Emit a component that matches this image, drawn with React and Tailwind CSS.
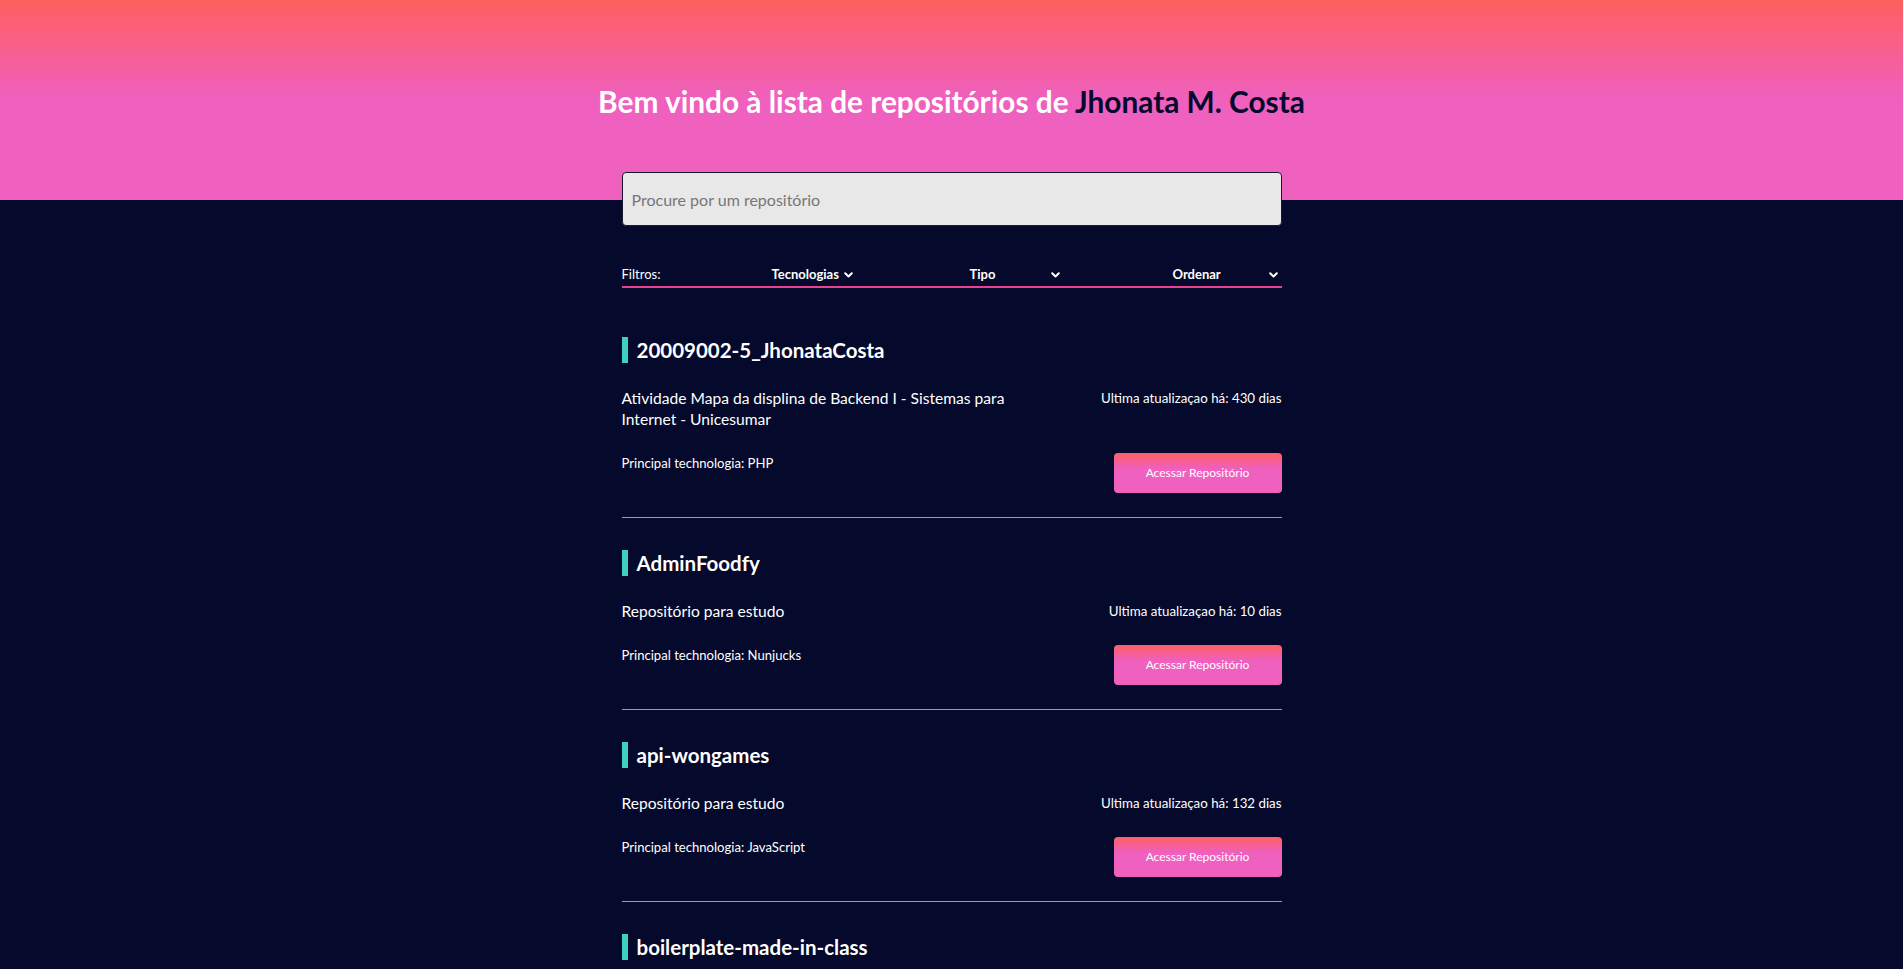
import React from "react";

const repos = [
  {
    name: "20009002-5_JhonataCosta",
    desc: "Atividade Mapa da displina de Backend I - Sistemas para Internet - Unicesumar",
    days: 430,
    tech: "PHP",
  },
  { name: "AdminFoodfy", desc: "Repositório para estudo", days: 10, tech: "Nunjucks" },
  { name: "api-wongames", desc: "Repositório para estudo", days: 132, tech: "JavaScript" },
  { name: "boilerplate-made-in-class", desc: "Repositório para estudo", days: 45, tech: "JavaScript" },
  { name: "clone-tinder", desc: "Repositório para estudo", days: 300, tech: "JavaScript" },
];

function Chevron() {
  return (
    <svg width="9" height="6" viewBox="0 0 9 6" className="inline-block">
      <path d="M1.2 1.2 L4.5 4.5 L7.8 1.2" fill="none" stroke="white" strokeWidth="2" strokeLinecap="round" strokeLinejoin="round" />
    </svg>
  );
}

function Repo({ r }) {
  return (
    <div className="pt-[32px] pb-[24px] border-b border-[#9a9aa6]">
      <div className="flex items-center h-[26px]">
        <div className="w-[6px] h-[26px] bg-[#3fd1c0]" />
        <h2 className="ml-[9px] text-[20.5px] font-bold text-white leading-[26px]">{r.name}</h2>
      </div>
      <div className="mt-[25px] flex justify-between items-start">
        <p className="w-[420px] text-[15.6px] leading-[21px] text-white">{r.desc}</p>
        <span className="text-[13.3px] leading-[21px] text-white">Ultima atualizaçao há: {r.days} dias</span>
      </div>
      <div className="mt-[23px] flex justify-between items-start">
        <span className="text-[13.1px] leading-[20px] text-white">Principal technologia: {r.tech}</span>
        <button className="w-[168px] h-[40px] rounded-[4px] bg-[linear-gradient(to_bottom,#ff5f66_0%,#ef60bf_40%,#ef60bf_100%)] text-white text-[12px]">
          Acessar Repositório
        </button>
      </div>
    </div>
  );
}

export default function App() {
  return (
    <div
      className="min-h-screen bg-[linear-gradient(to_bottom,#ff5f5f_0px,#ef60bf_100px,#ef60bf_200px,#05092b_200px,#05092b_100%)]"
      style={{ fontFamily: "Lato, 'Noto Sans', sans-serif" }}
    >
      <div className="pt-[83px] text-center">
        <h1 className="text-[29.8px] leading-[38px] font-bold text-white">
          Bem vindo à lista de repositórios de <span className="text-[#05092b]">Jhonata M. Costa</span>
        </h1>
      </div>
      <div className="w-[660px] mx-auto mt-[51px]">
        <input
          placeholder="Procure por um repositório"
          className="w-full h-[54px] rounded-[4px] bg-[#e8e8e8] border border-[#1a1a2e] px-[9px] text-[16px] placeholder:text-[#777777] outline-none"
        />
        <div className="mt-[38px] flex items-center h-[24px] border-b-2 border-[#e8418f] text-[13px] font-bold text-white">
          <span className="w-[150px] font-normal">Filtros:</span>
          <span className="w-[198px] flex items-center gap-[5px]">Tecnologias <Chevron /></span>
          <span className="w-[90px] flex items-center justify-between">Tipo <Chevron /></span>
          <span className="ml-[113px] w-[105px] flex items-center justify-between">Ordenar <Chevron /></span>
        </div>
        <div className="mt-[17px]">
          {repos.map((r) => (
            <Repo key={r.name} r={r} />
          ))}
        </div>
      </div>
    </div>
  );
}
